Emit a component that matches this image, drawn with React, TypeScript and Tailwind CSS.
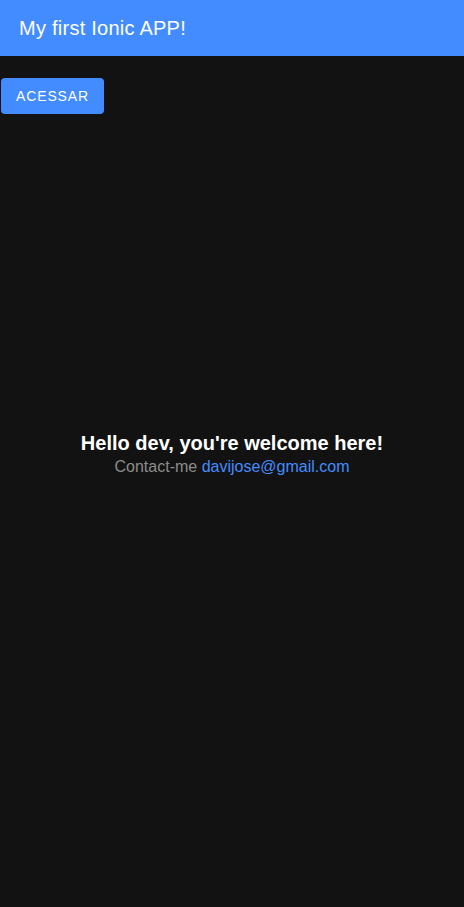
export default function App() {
  return (
    <div
      className="flex min-h-[907px] flex-col bg-[#121212]"
      style={{ fontFamily: '"Liberation Sans", Arial, sans-serif' }}
    >
      <header className="flex h-[56px] shrink-0 items-center bg-[#428cff] pl-[19px]">
        <h1 className="text-[20px] font-normal tracking-[0.0125em] text-white">My first Ionic APP!</h1>
      </header>
      <div className="pt-[22px] pl-[1px]">
        <button className="flex h-[36px] w-[103px] items-center justify-center rounded-[4px] bg-[#428cff] text-[14px] uppercase tracking-[0.06em] text-white">
          Acessar
        </button>
      </div>
      <div className="flex flex-1 flex-col items-center justify-center pb-[114px] text-center">
        <strong className="text-[20px] leading-[26px] font-bold text-white">Hello dev, you're welcome here!</strong>
        <p className="text-[16px] leading-[22px] text-[#8c8c8c]">
          Contact-me <a className="text-[#428cff]">davijose@gmail.com</a>
        </p>
      </div>
    </div>
  );
}
